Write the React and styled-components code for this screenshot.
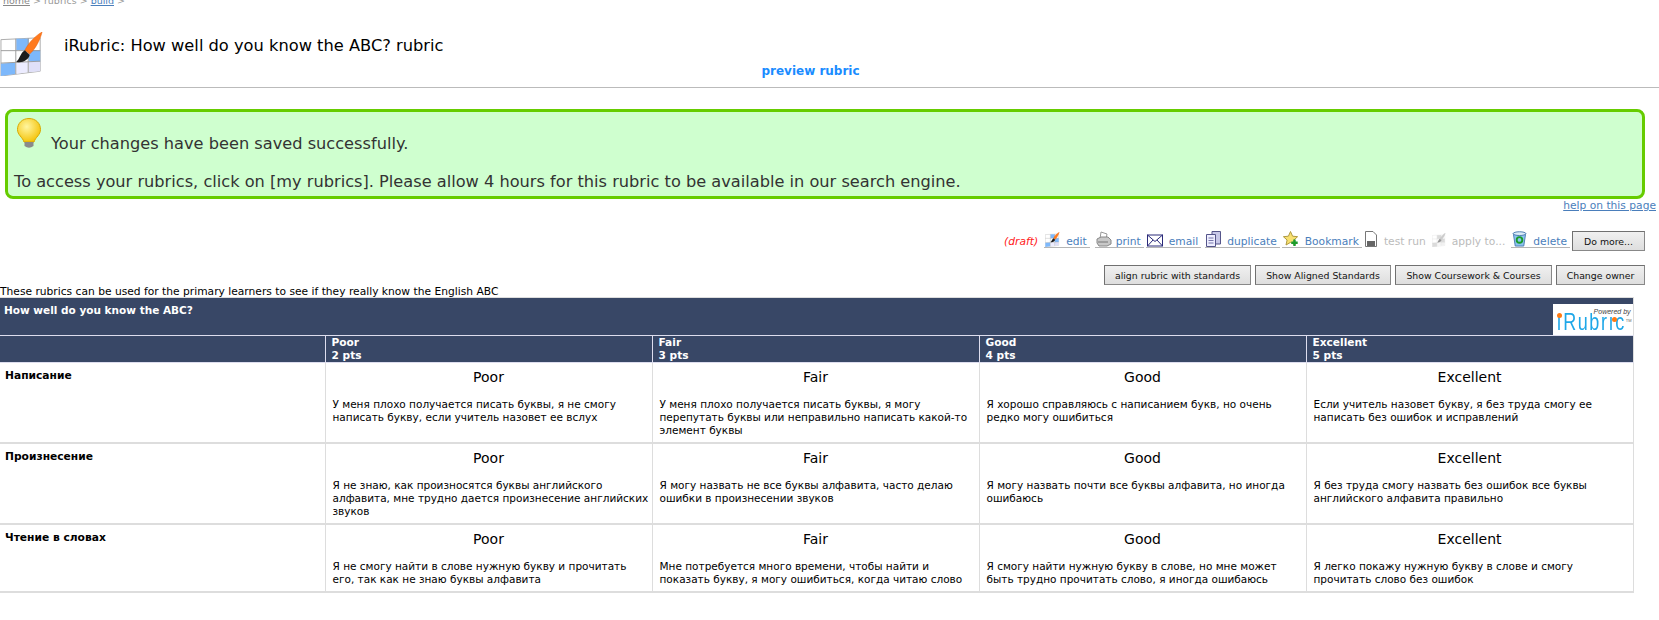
import React from "react";
import styled, { createGlobalStyle } from "styled-components";

const Global = createGlobalStyle`
  html, body { margin: 0; padding: 0; background: #fff; }
  body { font-family: "DejaVu Sans", Verdana, sans-serif; color: #000; overflow: hidden; }
`;

const Page = styled.div`
  width: 1659px;
  height: 620px;
  overflow: hidden;
`;
const Crumbs = styled.div`
  height: 7px;
  padding-left: 3px;
  font-size: 9.5px;
  color: #999;
  overflow: hidden;
  display: flex;
  align-items: flex-end;
`;
const CrumbInner = styled.div`
  white-space: pre;
  line-height: 12px;
  height: 12px;
  flex: none;
`;
const CrumbLink = styled.a`
  color: ${(p) => (p.$blue ? "#4a7ebb" : "#888")};
  text-decoration: underline;
`;
const Masthead = styled.header`
  display: flex;
  align-items: flex-start;
  padding-top: 25px;
  gap: 20px;
  box-sizing: border-box;
  height: 59px;
`;
const Title = styled.h1`
  margin: 4px 0 0;
  font-size: 16.25px;
  line-height: 19px;
  font-weight: 400;
  color: #000;
`;
const Preview = styled.div`
  margin-top: -4px;
  height: 25px;
  line-height: 16px;
  text-align: center;
  font-size: 12px;
  font-weight: 700;
  color: #1a8cff;
  padding-right: 38px;
  padding-top: 1px;
  box-sizing: border-box;
`;
const Rule = styled.hr`
  margin: 0;
  border: 0;
  height: 1px;
  background: #bbb;
`;
const Alert = styled.section`
  margin: 21px 14px 0 5px;
  height: 90px;
  box-sizing: border-box;
  background: #cfffcf;
  border: 3px solid #66cc00;
  border-radius: 8px;
  color: #333;
  font-size: 16.2px;
  line-height: 20px;
  padding: 6px 0 0 9px;
`;
const AlertHead = styled.div`
  display: flex;
  align-items: flex-start;
  gap: 10px;
  height: 39px;
`;
const AlertHeadText = styled.span`
  margin-top: 16px;
  white-space: nowrap;
`;
const AlertBody = styled.div`
  margin-top: 15px;
  margin-left: -3px;
  white-space: nowrap;
`;
const Help = styled.div`
  text-align: right;
  padding-right: 3px;
  height: 28px;
  line-height: 14px;
  font-size: 10.7px;
  color: #4a7ebb;
  text-decoration: underline;
`;
const ActionRow = styled.div`
  display: flex;
  justify-content: flex-end;
  align-items: flex-start;
  padding-right: 14px;
  height: 20px;
  margin-top: 4px;
  font-size: 10.7px;
`;
const Draft = styled.em`
  color: #ff2020;
  margin: 4px 6px 0 0;
  line-height: 14px;
`;
const Action = styled.a`
  display: flex;
  align-items: flex-end;
  gap: ${(p) => p.$inner ?? 6}px;
  box-sizing: border-box;
  height: 17px;
  padding: 0 ${(p) => (p.$off ? 0 : 3)}px 0 ${(p) => (p.$off ? 0 : 1)}px;
  margin-right: ${(p) => p.$gap}px;
  color: ${(p) => (p.$off ? "#bbb" : "#4a7ebb")};
  border-bottom: 1px solid ${(p) => (p.$off ? "transparent" : "#b5b5b5")};
`;
const ActionLabel = styled.span`
  align-self: flex-start;
  line-height: 14px;
  margin-top: 4px;
`;
const Btn = styled.button`
  height: 20px;
  box-sizing: border-box;
  padding: 0;
  width: ${(p) => p.$w}px;
  font-family: inherit;
  font-size: 9.35px;
  color: #111;
  background: linear-gradient(#f0f0f0, #dedede);
  border: 1px solid #707070;
  border-right-color: #888;
  border-bottom-color: #888;
`;
const ButtonRow = styled.div`
  display: flex;
  justify-content: flex-end;
  gap: 4px;
  padding-right: 14px;
  margin-top: 14px;
`;
const Desc = styled.div`
  font-size: 10.7px;
  line-height: 13px;
  height: 12px;
  white-space: nowrap;
`;
const Table = styled.table`
  border-collapse: collapse;
  table-layout: fixed;
  width: 1633px;
  font-size: 10.5px;
  line-height: 13px;
  border-right: 1px solid #ddd;
`;
const TitleCell = styled.td`
  height: 37px;
  padding: 0;
  background: #384766;
  color: #fff;
  font-weight: 700;
  border-top: 1px solid #ddd;
  border-bottom: 1px solid #dde;
  vertical-align: top;
`;
const TitleWrap = styled.div`
  display: flex;
  justify-content: space-between;
  height: 37px;
`;
const TitleText = styled.span`
  padding: 6px 0 0 4px;
`;
const Logo = styled.div`
  position: relative;
  margin-top: 6px;
  width: 80px;
  height: 31px;
  background: #fff;
  overflow: hidden;
`;
const Powered = styled.span`
  position: absolute;
  top: 4px;
  right: 2px;
  font: italic 7px/8px "Liberation Sans", sans-serif;
  color: #444;
  white-space: nowrap;
`;
const LogoWord = styled.span`
  position: absolute;
  left: 4px;
  top: 8px;
  font: 400 18px/20px "Liberation Sans", sans-serif;
  letter-spacing: 1.6px;
  color: #1ea7e8;
  white-space: nowrap;
  transform: scaleY(1.3);
  transform-origin: left center;
`;
const LogoDot = styled.span`
  position: absolute;
  width: 5px;
  height: 5px;
  border-radius: 50%;
  background: #ff7a12;
  left: ${(p) => p.$x}px;
  top: ${(p) => p.$y}px;
`;
const Tm = styled.span`
  position: absolute;
  right: 1px;
  top: 14px;
  font: 4px/5px "Liberation Sans", sans-serif;
  color: #666;
`;
const Th = styled.th`
  height: 25px;
  padding: 0 0 0 6px;
  background: #384766;
  color: #fff;
  text-align: left;
  vertical-align: top;
  font-size: 10.6px;
  font-weight: 700;
  border-left: 1px solid #dde;
  border-bottom: 1px solid #dde;
  &:first-child { border-left: 0; }
`;
const Label = styled.td`
  padding: 6px 0 0 5px;
  vertical-align: top;
  font-size: 10.7px;
  font-weight: 700;
  border-bottom: 2px solid #ddd;
`;
const Cell = styled.td`
  padding: 6px 7px 5px;
  vertical-align: top;
  border-left: 1px solid #ddd;
  border-bottom: 2px solid #ddd;
`;
const Level = styled.div`
  text-align: center;
  font-size: 14px;
  line-height: 17px;
  margin-bottom: 12px;
`;
const Text = styled.div`
  margin-right: -4px;
  height: ${(p) => (p.$short ? "auto" : "39px")};
`;

const Sheet = ({ size = 44, dim }) => (
  <svg width={size} height={size} viewBox="0 0 44 46" style={dim ? { opacity: 0.45, filter: "grayscale(1)" } : undefined}>
    <path d="M0 8 L41 6 V41 L0 46Z" fill="#fff" stroke="#aaa" strokeWidth="1" />
    <path d="M16 7 H29 V19 H16Z" fill="#7db8fb" />
    <path d="M29 19 H41 V31 H29Z" fill="#7db8fb" />
    <path d="M0 33 L15 32 V44 L0 46Z" fill="#7db8fb" />
    <path d="M16 32 L28 31 V42 L16 44Z" fill="#ececff" />
    <path d="M29 31 H41 V41 L29 42Z" fill="#e0e0f8" />
    <path d="M0 19.5 H41 M0 32.5 L41 30.5 M15.5 7 V44 M28.5 6.5 V42" stroke="#9a9a9a" strokeWidth="1" fill="none" />
    <path d="M43 0 C41 8 36 18 30 23 L25 19 C29 11 36 4 43 0Z" fill="#ff7a1e" stroke="#e85a00" strokeWidth=".5" />
    <path d="M25 19 L30 24 C29 29 22 33 16 31 C20 28 20 22 25 19Z" fill="#1c1c1c" />
  </svg>
);
const Printer = () => (
  <svg width="16" height="16" viewBox="0 0 16 16">
    <path d="M5 1 L11 3 L10 8 H4Z" fill="#fff" stroke="#999" />
    <path d="M1 8 L5 6 H12 L15 9 V13 L11 15 H3 L1 12Z" fill="#c8c8c8" stroke="#888" />
    <path d="M2 11 H12" stroke="#777" />
  </svg>
);
const Mail = () => (
  <svg width="16" height="13" viewBox="0 0 16 12">
    <rect x=".5" y=".5" width="15" height="11" fill="#fff" stroke="#2a2a7a" />
    <path d="M.5 .5 L8 7 L15.5 .5 M.5 11.5 L6 5.5 M15.5 11.5 L10 5.5" fill="none" stroke="#2a2a7a" />
  </svg>
);
const Dup = () => (
  <svg width="15" height="16" viewBox="0 0 15 16">
    <path d="M6 .5 H14.5 V13 H6Z" fill="#c8c8e8" stroke="#55558a" />
    <path d="M.5 3.5 H9.5 V15.5 H.5Z" fill="#eef" stroke="#55558a" />
    <path d="M2.5 7 H7.5 M2.5 9.5 H7.5 M2.5 12 H7.5" stroke="#7777aa" />
  </svg>
);
const Star = () => (
  <svg width="16" height="16" viewBox="0 0 16 16">
    <path d="M7.5 .5 L9.6 5.2 L14.6 5.7 L10.9 9 L12 14 L7.5 11.4 L3 14 L4.1 9 L.4 5.7 L5.4 5.2Z" fill="#f8e070" stroke="#b09a40" />
    <path d="M11.5 8.5 V15 M8.3 11.8 H14.7" stroke="#1c9c2c" strokeWidth="2.4" />
  </svg>
);
const DocGrey = () => (
  <svg width="12" height="16" viewBox="0 0 12 16">
    <path d="M.5 .5 H8 L11.5 4 V15.5 H.5Z" fill="#fff" stroke="#777" />
    <path d="M2 10 H10 V15 H2Z" fill="#666" />
  </svg>
);
const Bin = () => (
  <svg width="15" height="16" viewBox="0 0 15 17">
    <path d="M1 3 L3 16 H12 L14 3Z" fill="#8cc4f0" stroke="#4a7ab0" />
    <ellipse cx="7.5" cy="2.8" rx="6.8" ry="2" fill="#dcecf8" stroke="#4a7ab0" />
    <circle cx="7.5" cy="9.5" r="3" fill="none" stroke="#1c9c2c" strokeWidth="2" />
  </svg>
);
const Bulb = () => (
  <svg width="24" height="31" viewBox="0 0 24 31">
    <defs>
      <radialGradient id="bulb" cx=".4" cy=".35" r=".7">
        <stop offset="0" stopColor="#fff6a0" />
        <stop offset="1" stopColor="#f4c000" />
      </radialGradient>
    </defs>
    <path d="M12 .5 C5 .5 .5 5.5 .5 11.5 C.5 17 5.5 19 7 24 H17 C18.5 19 23.5 17 23.5 11.5 C23.5 5.5 19 .5 12 .5Z" fill="url(#bulb)" stroke="#d8a800" />
    <path d="M7.5 24 H16.5 V28 Q12 31.5 7.5 28Z" fill="#8a8a8a" />
  </svg>
);

const actions = [
  { icon: <Sheet size={15} />, label: "edit", gap: 5, inner: 6 },
  { icon: <Printer />, label: "print", gap: 2, inner: 4 },
  { icon: <Mail />, label: "email", gap: 4, inner: 6 },
  { icon: <Dup />, label: "duplicate", gap: 2, inner: 6 },
  { icon: <Star />, label: "Bookmark", gap: 3, inner: 6 },
  { icon: <DocGrey />, label: "test run", off: true, gap: 6, inner: 7 },
  { icon: <Sheet size={14} dim />, label: "apply to...", off: true, gap: 6, inner: 6 },
  { icon: <Bin />, label: "delete", gap: 2, inner: 6 },
];

const levels = [
  { name: "Poor", pts: "2 pts" },
  { name: "Fair", pts: "3 pts" },
  { name: "Good", pts: "4 pts" },
  { name: "Excellent", pts: "5 pts" },
];

const rows = [
  {
    label: "Написание",
    cells: [
      "У меня плохо получается писать буквы, я не смогу написать букву, если учитель назовет ее вслух",
      "У меня плохо получается писать буквы, я могу перепутать буквы или неправильно написать какой-то элемент буквы",
      "Я хорошо справляюсь с написанием букв, но очень редко могу ошибиться",
      "Если учитель назовет букву, я без труда смогу ее написать без ошибок и исправлений",
    ],
  },
  {
    label: "Произнесение",
    cells: [
      "Я не знаю, как произносятся буквы английского алфавита, мне трудно дается произнесение английских звуков",
      "Я могу назвать не все буквы алфавита, часто делаю ошибки в произнесении звуков",
      "Я могу назвать почти все буквы алфавита, но иногда ошибаюсь",
      "Я без труда смогу назвать без ошибок все буквы английского алфавита правильно",
    ],
  },
  {
    label: "Чтение в словах",
    short: true,
    cells: [
      "Я не смогу найти в слове нужную букву и прочитать его, так как не знаю буквы алфавита",
      "Мне потребуется много времени, чтобы найти и показать букву, я могу ошибиться, когда читаю слово",
      "Я смогу найти нужную букву в слове, но мне может быть трудно прочитать слово, я иногда ошибаюсь",
      "Я легко покажу нужную букву в слове и смогу прочитать слово без ошибок",
    ],
  },
];

export default function App() {
  return (
    <Page>
      <Global />
      <Crumbs>
        <CrumbInner>
          <CrumbLink>home</CrumbLink>{" > rubrics > "}<CrumbLink $blue>build</CrumbLink>{" >"}
        </CrumbInner>
      </Crumbs>
      <Masthead>
        <Sheet size={44} />
        <Title>iRubric: How well do you know the ABC? rubric</Title>
      </Masthead>
      <Preview>preview rubric</Preview>
      <Rule />
      <Alert>
        <AlertHead>
          <Bulb />
          <AlertHeadText>Your changes have been saved successfully.</AlertHeadText>
        </AlertHead>
        <AlertBody>To access your rubrics, click on [my rubrics]. Please allow 4 hours for this rubric to be available in our search engine.</AlertBody>
      </Alert>
      <Help>help on this page</Help>
      <ActionRow>
        <Draft>(draft)</Draft>
        {actions.map((a) => (
          <Action key={a.label} $off={a.off} $gap={a.gap} $inner={a.inner}>
            {a.icon}
            <ActionLabel>{a.label}</ActionLabel>
          </Action>
        ))}
        <Btn $w={73}>Do more...</Btn>
      </ActionRow>
      <ButtonRow>
        <Btn $w={147}>align rubric with standards</Btn>
        <Btn $w={136}>Show Aligned Standards</Btn>
        <Btn $w={157}>Show Coursework &amp; Courses</Btn>
        <Btn $w={89}>Change owner</Btn>
      </ButtonRow>
      <Desc>These rubrics can be used for the primary learners to see if they really know the English ABC</Desc>
      <Table>
        <colgroup>
          <col style={{ width: 325 }} />
          <col style={{ width: 327 }} />
          <col style={{ width: 327 }} />
          <col style={{ width: 327 }} />
          <col style={{ width: 327 }} />
        </colgroup>
        <tbody>
          <tr>
            <TitleCell colSpan={5}>
              <TitleWrap>
                <TitleText>How well do you know the ABC?</TitleText>
                <Logo>
                  <Powered>Powered by</Powered>
                  <LogoWord>ıRubrıc</LogoWord>
                  <LogoDot $x={4} $y={9} />
                  <LogoDot $x={59} $y={13} />
                  <Tm>TM</Tm>
                </Logo>
              </TitleWrap>
            </TitleCell>
          </tr>
          <tr>
            <Th />
            {levels.map((l) => (
              <Th key={l.name}>
                {l.name}
                <br />
                {l.pts}
              </Th>
            ))}
          </tr>
          {rows.map((r) => (
            <tr key={r.label}>
              <Label>{r.label}</Label>
              {r.cells.map((c, i) => (
                <Cell key={i}>
                  <Level>{levels[i].name}</Level>
                  <Text $short={r.short}>{c}</Text>
                </Cell>
              ))}
            </tr>
          ))}
        </tbody>
      </Table>
    </Page>
  );
}
